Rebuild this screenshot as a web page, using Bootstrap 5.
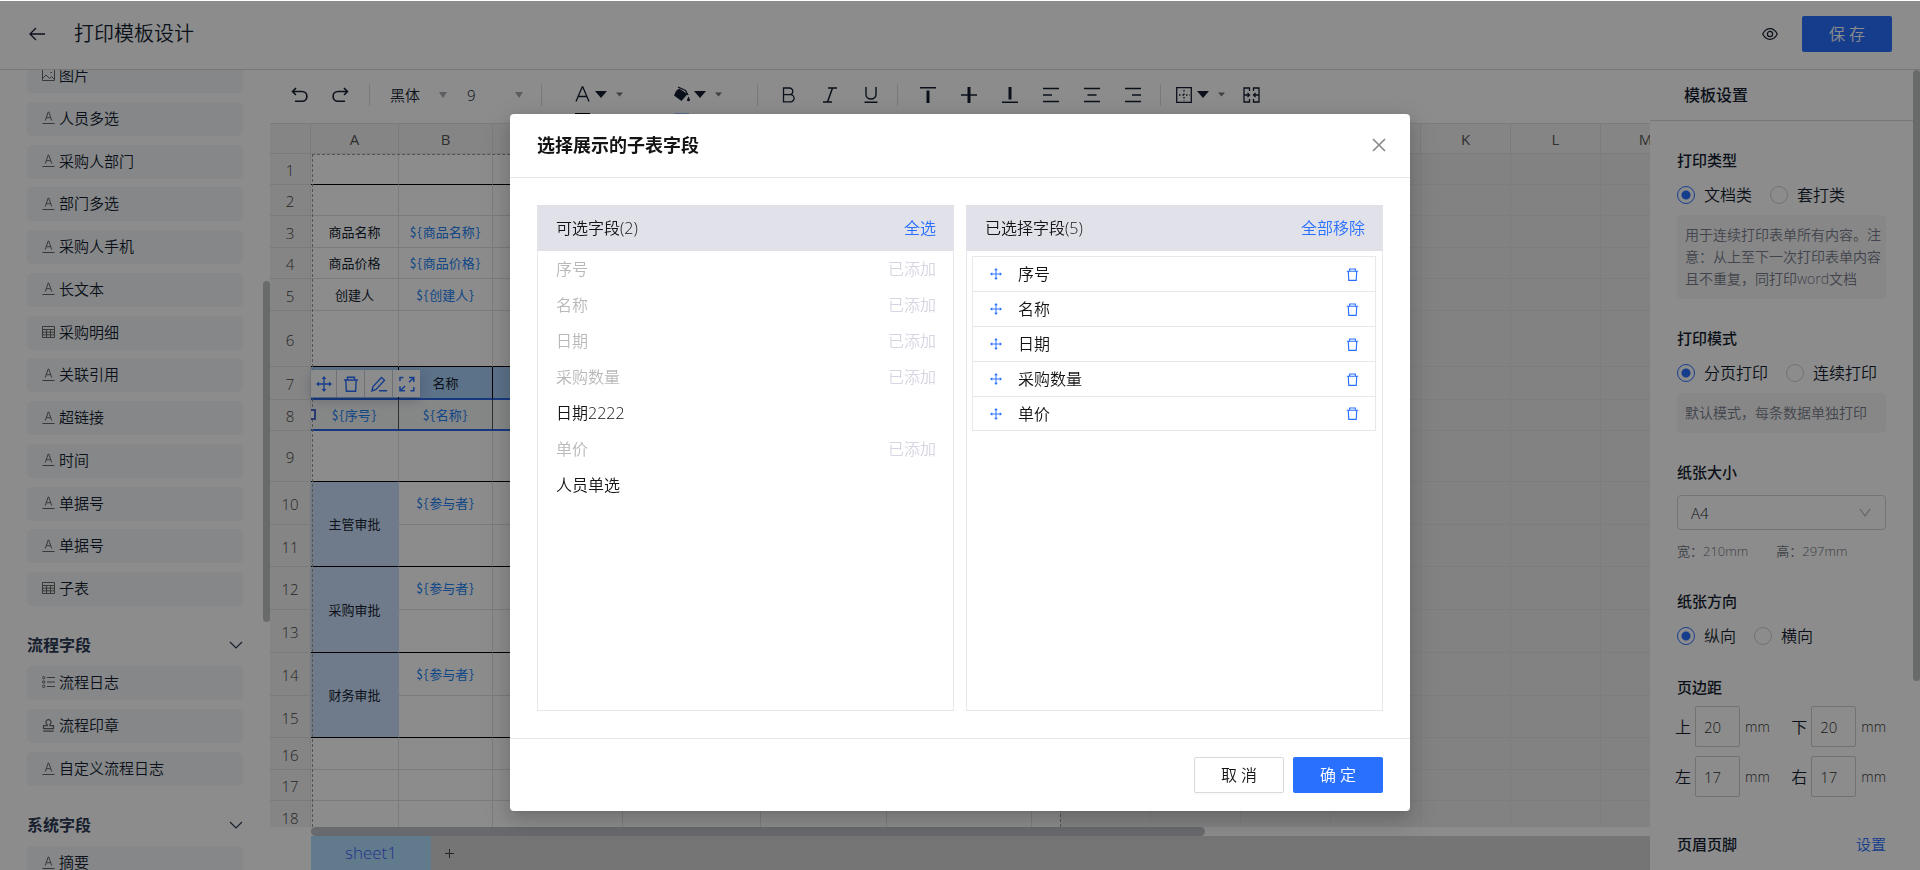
<!DOCTYPE html>
<html lang="zh-CN">
<head>
<meta charset="utf-8">
<meta name="viewport" content="width=device-width, initial-scale=1">
<title>打印模板设计</title>
<link rel="stylesheet" href="https://cdn.jsdelivr.net/npm/bootstrap@5.3.0/dist/css/bootstrap.min.css">
<style>
:root{--blue:#2970ff;--ink:#141e31;--line:#e1e1e1}
body{font-family:"Open Sans","Noto Sans CJK SC",sans-serif;font-size:15px;line-height:24px;font-weight:350;color:var(--ink);background:#fff;padding-top:1px}
button,input,select{font-weight:inherit}
svg{display:block;flex:none}
.ic{fill:none;stroke:currentColor}
a{color:var(--blue);text-decoration:none}
.main-blue{background:var(--blue);color:#fff;border:0}
.act{width:90px;height:36px;border-radius:2px;font-size:16px;font-weight:350;line-height:24px;padding:0}
.act:hover{background:var(--blue);color:#fff}
.bare{border:0;background:none;padding:0;color:inherit}

/* top bar */
.topbar{height:69px;border-bottom:1px solid #d9d9d9;padding:0 28px 3px}
.topbar h1{font-size:20px;line-height:28px;font-weight:350;margin:0 0 0 28px}

/* field list */
.fields{width:270px}
.fields-in{padding:0 27px;margin-top:-11px}
.fields h2{font-size:16px;line-height:42px;font-weight:700;padding-top:18px;margin:0;color:#2c3a55}
.fld{height:34px;padding:0 15px 2px;gap:4px;border-radius:5px;background:#f3f6f9;color:var(--ink)}
.fld svg{color:#666}
.fld-long{height:547px}
.thumb{position:absolute;right:0;width:7px;border-radius:4px;background:#bfc4c3}
.fields .thumb{top:211px;height:341px}

/* editor toolbar */
.tools{height:53px;padding:0 0 4px 21px}
.tool{width:41px;height:34px;display:flex;align-items:center;justify-content:center}
.sep{width:1px;height:22px;background:#dcdce0}
.pick{border:0;background:no-repeat right center/8px 6px url("data:image/svg+xml,%3Csvg xmlns='http://www.w3.org/2000/svg' viewBox='0 0 8 6'%3E%3Cpath d='M0 0h8L4 6z' fill='%23a9abb2'/%3E%3C/svg%3E");appearance:none;color:var(--ink);padding:0;height:30px;line-height:30px}
.swatch-tool{width:46px;gap:5px;position:relative;height:44px}
.swatch-tool i{position:absolute;left:0;bottom:1px;width:15px;height:3px}

/* sheet */
.sheet-view{overflow:hidden;position:relative}
.cells{border-collapse:separate;border-spacing:0;table-layout:fixed;background:linear-gradient(to right,#fff 790px,#ededed 790px)}
.cells th{background:#f3f3f3;color:#585757;font-weight:400;font-size:15px;line-height:20px;text-align:center;vertical-align:middle;padding:0;border:0 solid var(--line);border-width:0 1px 1px 0}
.cells thead th{height:31px;border-top-width:1px}
.cells tbody th{padding-top:2px;color:#444;font-weight:350}
.cells td{font-size:13px;line-height:18px;text-align:center;vertical-align:middle;padding:0;border:0 solid var(--line);border-width:0 1px 1px 0;font-family:"Noto Sans CJK SC",sans-serif;font-weight:400;white-space:nowrap}
.cells td.out{border-color:#e4e4e4}
.cells .tag{color:#2082f4;font-feature-settings:"hwid"}
.cells tr.k td.in{border-bottom-color:#000}
.cells td.step{background:#cbe1fc;border-right-color:#cbe1fc;border-bottom-color:#000}
.cells tr.head td.in{background:#a8cff8;border-right-color:#000;border-bottom:2px solid #2b66ea}
.cells tr.sel td.in{background:#f3f5f5;border-right-color:#555;border-bottom:2px solid #2b66ea}
.pagebox{position:absolute;left:42px;top:31px;width:749px;bottom:0;border:1px dashed #999;border-bottom:0}
.floatbar{position:absolute;left:41px;top:247px;gap:1px;background:#c9ccda;box-shadow:0 3px 12px rgba(40,60,120,.25)}
.floatbar button{width:27px;height:27px;background:#fff;color:var(--blue);display:flex;align-items:center;justify-content:center}
.floatbar button:first-child{width:25px}
.handle{position:absolute;left:41px;top:286px;width:5px;height:11px;border:2px solid #4b6ad0;border-left:0;background:#fff}
.hbar{height:9px}
.hbar div{height:9px;width:894px;margin-left:41px;border-radius:5px;background:#bfc1c8}
.tabs{height:34px;background:#d6d6d6}
.tabs .corner{width:41px;background:#fff}
.tabs .cur{width:120px;background:#b2e1ff;color:#3f5cff;font-size:17px}
.tabs .plus{width:36px;color:#444}

/* settings */
.settings{width:270px}
.settings h2{font-size:16px;line-height:24px;font-weight:500;margin:0 7px 0 0;padding:13px 34px;border-bottom:1px solid #d9d9d9}
.settings-in{padding:28px 34px 0 27px}
.settings h3,.settings legend{font-size:15px;line-height:22px;padding-bottom:2px;font-weight:500;margin:0;float:none}
.settings section,.settings fieldset{margin-bottom:28px}
.settings .thumb{top:0;height:611px}
.opts{gap:18px;margin-top:10px;font-size:16px}
.opts label{display:flex;align-items:center;gap:9px}
.opts .form-check-input{width:18px;height:18px;margin:0;border:1px solid #d0d0d0;background-color:#fff}
.opts .form-check-input:checked{border-color:var(--blue);background:radial-gradient(circle,var(--blue) 4px,transparent 5px)}
.hint{margin:8px 0 0;padding:9px 5px 9px 8px;border-radius:5px;background:#f6f6f7;color:#777c8a;font-size:14px;line-height:22px}
.paper{width:100%;height:35px;margin-top:10px;padding:0 13px;border:1px solid #d3d3d3;border-radius:4px;color:var(--ink);appearance:none;background:no-repeat right 14px center/12px 10px url("data:image/svg+xml,%3Csvg xmlns='http://www.w3.org/2000/svg' viewBox='0 0 12 10'%3E%3Cpath d='M1 1l5 7 5-7' fill='none' stroke='%23b5b5b5' stroke-width='1.2'/%3E%3C/svg%3E") #fff}
.dims{margin-top:10px;font-size:13px;line-height:22px;color:#6f7482;gap:28px}
.margins{display:grid;grid-template-columns:auto auto;justify-content:space-between;row-gap:9px;margin:6px 0 0 -2px}
.margins label{display:flex;align-items:center;gap:4px;font-size:16px}
.margins input{width:45px;height:41px;border:1px solid #cfcfcf;border-radius:2px;padding:0 8px;font-size:15px;color:#333;background:none}
.margins span{font-size:14px;margin-left:1px;color:#333}

/* overlay and dialog */
.veil{position:fixed;inset:1px 0 0;background:rgba(0,0,0,.45);z-index:1040}
.picker{max-width:900px;margin:114px auto 0}
.picker .modal-content{border:0;border-radius:4px;box-shadow:0 3px 6px -4px rgba(0,0,0,.12),0 6px 16px rgba(0,0,0,.12),0 9px 28px 8px rgba(0,0,0,.1);color:#141414}
.picker .modal-header{height:64px;padding:0 24px 1px 27px;border-bottom:1px solid #e8e8e8}
.picker .modal-title{font-size:18px;font-weight:700;line-height:26px}
.picker .modal-body{padding:27px;font-size:16px;gap:12px}
.pane{height:506px;border:1px solid #e8e8eb;flex:1 1 0}
.pane-head{height:46px;margin:-1px -1px 0;padding:0 18px 0 19px;background:#e1e1ea}
.pane h3{font-size:16px;line-height:24px;font-weight:350;margin:0}
.pool li{height:36px;padding:0 17px 0 18px}
.pool .used{color:#b9b9b9}
.pool .used span+span{color:#d6d6e2}
.chosen{margin:5px 6px 0 5px;border:1px solid #e8e8eb}
.chosen li{height:35px;padding:0 16px 0 17px;gap:16px;border-bottom:1px solid #e8e8eb}
.chosen li:last-child{border-bottom:0;height:33px}
.chosen svg{color:var(--blue)}
.picker .modal-footer{padding:18px 27px;gap:9px;border-top:1px solid #e8e8e8}
.picker .modal-footer>*{margin:0}
.cancel{border:1px solid #d9d9d9;background:#fff;color:#141414;box-shadow:0 2px 0 rgba(0,0,0,.02)}
</style>
</head>
<body class="vh-100 d-flex flex-column overflow-hidden">

<svg width="0" height="0" class="position-absolute" aria-hidden="true">
  <symbol id="i-text" viewBox="0 0 12 13"><path class="ic" d="M2.800 9.500 5.700 1h.6l2.900 8.500M3.800 6.700h4.400M0 12.500h12"/></symbol>
  <symbol id="i-img" viewBox="0 0 13 12"><path class="ic" d="M.5.500h12v11H.5zM.5 9.500L4 6l3.500 3.500 2-2 3 3M8.500 3.500h1.500"/></symbol>
  <symbol id="i-table" viewBox="0 0 13 12"><path class="ic" d="M.5.500h12v11H.5zM.5 3.500h12M.5 6.200h12M.5 8.800h12M4.500 3.500v8M8.500 3.500v8"/></symbol>
  <symbol id="i-list" viewBox="0 0 13 12"><path class="ic" d="M5 1.500h8M5 6h8M5 10.500h8"/><g class="ic"><circle cx="1.700" cy="1.700" r="1.200"/><circle cx="1.700" cy="6" r="1.200"/><circle cx="1.700" cy="10.300" r="1.200"/></g></symbol>
  <symbol id="i-stamp" viewBox="0 0 12 13"><path class="ic" stroke-width="1.200" d="M4.700 6.700V5.500a2.600 2.600 0 1 1 2.600 0v1.200h3.700v3H1v-3zM.8 12.200h10.400"/></symbol>
  <symbol id="i-down" viewBox="0 0 14 10"><path class="ic" stroke-width="1.200" d="M1 2l6 6 6-6"/></symbol>
  <symbol id="i-move" viewBox="0 0 16 16"><path class="ic" stroke-width="1.300" d="M8 1.500v13M1.500 8h13"/><path fill="currentColor" d="M8 0l2.400 3H5.600zM8 16l2.400-3H5.600zM0 8l3-2.400v4.800zM16 8l-3-2.400v4.800z"/></symbol>
  <symbol id="i-trash" viewBox="0 0 16 16"><path class="ic" stroke-width="1.400" d="M1 4h14M4.500 4V1.200h7V4M2.800 4l.6 11.200h9.200L13.200 4"/></symbol>
  <symbol id="i-pen" viewBox="0 0 16 16"><path class="ic" stroke-width="1.400" d="M1 15l1-4.500L10.500 1.500l3 2.800L5 13.500zM8 14.800h8"/></symbol>
  <symbol id="i-full" viewBox="0 0 16 16"><path class="ic" stroke-width="1.500" d="M1 5V1.500h3.500M10 1.500h4.800V6M14.800 11v3.800H11.500M6 14.800H1V10.300M14.500 1.800L10 6.300M1.500 14.500L6 10"/></symbol>
  <symbol id="i-tri" viewBox="0 0 12 7"><path fill="currentColor" d="M0 0h12L6 7z"/></symbol>
</svg>

<header class="topbar d-flex align-items-center flex-shrink-0">
  <button class="bare" aria-label="返回"><svg width="18" height="14" viewBox="0 0 18 14"><path class="ic" stroke-width="1.300" d="M17 7H2M8 1L2 7l6 6"/></svg></button>
  <h1>打印模板设计</h1>
  <button class="bare ms-auto" aria-label="预览"><svg width="16" height="12" viewBox="0 0 16 12"><g class="ic" stroke-width="1.200"><path d="M.7 6C2.500 2.500 5 .7 8 .7S13.500 2.500 15.300 6C13.500 9.500 11 11.300 8 11.300S2.500 9.500.7 6z"/><circle cx="8" cy="6" r="2.600"/></g></svg></button>
  <button class="btn act main-blue ms-4">保 存</button>
</header>

<div class="d-flex flex-grow-1" style="min-height:0">
  <aside class="fields flex-shrink-0 overflow-hidden position-relative">
    <div class="fields-in">
      <div class="fld-long d-flex flex-column justify-content-between">
        <div class="fld d-flex align-items-center"><svg width="13" height="12"><use href="#i-img"/></svg>图片</div>
        <div class="fld d-flex align-items-center"><svg width="13" height="13"><use href="#i-text"/></svg>人员多选</div>
        <div class="fld d-flex align-items-center"><svg width="13" height="13"><use href="#i-text"/></svg>采购人部门</div>
        <div class="fld d-flex align-items-center"><svg width="13" height="13"><use href="#i-text"/></svg>部门多选</div>
        <div class="fld d-flex align-items-center"><svg width="13" height="13"><use href="#i-text"/></svg>采购人手机</div>
        <div class="fld d-flex align-items-center"><svg width="13" height="13"><use href="#i-text"/></svg>长文本</div>
        <div class="fld d-flex align-items-center"><svg width="13" height="12"><use href="#i-table"/></svg>采购明细</div>
        <div class="fld d-flex align-items-center"><svg width="13" height="13"><use href="#i-text"/></svg>关联引用</div>
        <div class="fld d-flex align-items-center"><svg width="13" height="13"><use href="#i-text"/></svg>超链接</div>
        <div class="fld d-flex align-items-center"><svg width="13" height="13"><use href="#i-text"/></svg>时间</div>
        <div class="fld d-flex align-items-center"><svg width="13" height="13"><use href="#i-text"/></svg>单据号</div>
        <div class="fld d-flex align-items-center"><svg width="13" height="13"><use href="#i-text"/></svg>单据号</div>
        <div class="fld d-flex align-items-center"><svg width="13" height="12"><use href="#i-table"/></svg>子表</div>
      </div>
      <h2 class="d-flex align-items-center justify-content-between">流程字段<svg width="14" height="10"><use href="#i-down"/></svg></h2>
      <div class="d-flex flex-column" style="gap:9px">
        <div class="fld d-flex align-items-center"><svg width="13" height="12"><use href="#i-list"/></svg>流程日志</div>
        <div class="fld d-flex align-items-center"><svg width="13" height="13"><use href="#i-stamp"/></svg>流程印章</div>
        <div class="fld d-flex align-items-center"><svg width="13" height="13"><use href="#i-text"/></svg>自定义流程日志</div>
      </div>
      <h2 class="d-flex align-items-center justify-content-between">系统字段<svg width="14" height="10"><use href="#i-down"/></svg></h2>
      <div class="fld d-flex align-items-center"><svg width="13" height="13"><use href="#i-text"/></svg>摘要</div>
    </div>
    <div class="thumb"></div>
  </aside>

  <main class="flex-grow-1 d-flex flex-column" style="min-width:0">
    <div class="tools d-flex align-items-center flex-shrink-0 overflow-hidden">
      <button class="bare me-4" aria-label="撤销"><svg width="17" height="16" viewBox="0 0 17 16"><path class="ic" stroke-width="1.600" d="M5 1L1.500 4.500 5 8M1.500 4.500H11a4.800 4.800 0 0 1 0 9.800H4"/></svg></button>
      <button class="bare" aria-label="重做"><svg width="17" height="16" viewBox="0 0 17 16"><path class="ic" stroke-width="1.600" d="M12 1l3.500 3.500L12 8M15.500 4.500H6a4.800 4.800 0 0 0 0 9.800h7"/></svg></button>
      <div class="sep" style="margin:0 20px"></div>
      <select class="pick" aria-label="字体" style="width:57px"><option>黑体</option></select>
      <select class="pick" aria-label="字号" style="width:56px;margin-left:20px"><option>9</option></select>
      <div class="sep" style="margin:0 33px 0 18px"></div>
      <button class="bare tool swatch-tool justify-content-start" aria-label="文字颜色"><svg width="15" height="18" viewBox="0 0 15 18"><path class="ic" stroke-width="1.300" d="M1 15.500L7.200 1h.6L14 15.500M3.300 10.500h8.400"/></svg><svg width="12" height="7"><use href="#i-tri"/></svg><svg class="ms-1" width="7" height="5" style="color:#777"><use href="#i-tri"/></svg><i style="background:#000"></i></button>
      <button class="bare tool swatch-tool justify-content-start" aria-label="填充颜色" style="margin-left:53px"><svg width="16" height="18" viewBox="0 0 16 18"><path fill="currentColor" d="M2 5l3-2.500 8.500 5.500L7.500 15 0 9.500z"/><path class="ic" stroke-width="1.300" d="M4 1l7.500 3.500L14 9"/><path fill="currentColor" d="M14.500 10.500l1.300 2.800a1.400 1.400 0 1 1-2.600 0z"/></svg><svg width="12" height="7" style="margin-left:-1px"><use href="#i-tri"/></svg><svg class="ms-1" width="7" height="5" style="color:#777"><use href="#i-tri"/></svg><i style="background:#9cc7ff"></i></button>
      <div class="sep" style="margin:0 10px 0 37px"></div>
      <button class="bare tool" aria-label="加粗"><svg width="16" height="16" viewBox="0 0 16 16"><path class="ic" stroke-width="1.300" d="M2.500 1H8.500a3.300 3.300 0 0 1 0 6.600H2.500zM2.500 7.600h7a3.600 3.600 0 0 1 0 7.200h-7z"/></svg></button>
      <button class="bare tool" aria-label="斜体"><svg width="16" height="16" viewBox="0 0 16 16"><path class="ic" stroke-width="1.500" d="M6 1h9M1 15h9M10.500 1l-5 14"/></svg></button>
      <button class="bare tool" aria-label="下划线"><svg width="16" height="16" viewBox="0 0 16 16"><path class="ic" stroke-width="1.400" d="M3 0v7.500a5 4.500 0 0 0 10 0V0M1.500 15.200h13"/></svg></button>
      <div class="sep" style="margin:0 9px 0 6px"></div>
      <button class="bare tool" aria-label="顶端对齐"><svg width="16" height="16" viewBox="0 0 16 16"><path fill="currentColor" d="M0 0h16v1.500H0zM6.500 3.500h3V16h-3z"/></svg></button>
      <button class="bare tool" aria-label="垂直居中"><svg width="16" height="16" viewBox="0 0 16 16"><path fill="currentColor" d="M0 7.200h16v1.600H0zM6.500 0h3v16h-3z"/></svg></button>
      <button class="bare tool" aria-label="底端对齐"><svg width="16" height="16" viewBox="0 0 16 16"><path fill="currentColor" d="M0 14.500h16V16H0zM6.500 0h3v12.500h-3z"/></svg></button>
      <button class="bare tool" aria-label="左对齐"><svg width="16" height="16" viewBox="0 0 16 16"><path class="ic" stroke-width="1.400" d="M0 1.500h16M0 8h9M0 14.500h16"/></svg></button>
      <button class="bare tool" aria-label="居中"><svg width="16" height="16" viewBox="0 0 16 16"><path class="ic" stroke-width="1.400" d="M0 1.500h16M3.500 8h9M0 14.500h16"/></svg></button>
      <button class="bare tool" aria-label="右对齐"><svg width="16" height="16" viewBox="0 0 16 16"><path class="ic" stroke-width="1.400" d="M0 1.500h16M7 8h9M0 14.500h16"/></svg></button>
      <div class="sep" style="margin:0 15px 0 7px"></div>
      <button class="bare tool swatch-tool justify-content-start" aria-label="边框"><svg width="16" height="16" viewBox="0 0 16 16"><path class="ic" stroke-width="1.300" d="M.7.700h14.600v14.600H.7z"/><path class="ic" stroke-width="1.300" stroke-dasharray="1.500 2" d="M3 8h11M8 3v11"/></svg><svg width="12" height="7"><use href="#i-tri"/></svg><svg class="ms-1" width="7" height="5" style="color:#777"><use href="#i-tri"/></svg></button>
      <button class="bare" aria-label="合并单元格" style="margin-left:21px"><svg width="17" height="16" viewBox="0 0 17 16"><path class="ic" stroke-width="1.300" d="M6.500 4V1H1v14h5.500v-3M10.500 4V1H16v14h-5.500v-3M1 8h5M16 8h-5M4.500 6l2 2-2 2M12.500 6l-2 2 2 2"/></svg></button>
    </div>

    <div class="sheet-view flex-grow-1">
      <table class="cells">
        <colgroup id="cols"></colgroup>
        <thead><tr id="letters"><th></th></tr></thead>
        <tbody id="rows"></tbody>
      </table>
      <div class="pagebox"></div>
      <div class="handle"></div>
      <div class="floatbar d-flex">
        <button class="bare" aria-label="移动"><svg width="16" height="16"><use href="#i-move"/></svg></button>
        <button class="bare" aria-label="删除"><svg width="16" height="16"><use href="#i-trash"/></svg></button>
        <button class="bare" aria-label="编辑"><svg width="16" height="16"><use href="#i-pen"/></svg></button>
        <button class="bare" aria-label="展开"><svg width="16" height="16"><use href="#i-full"/></svg></button>
      </div>
    </div>
    <div class="hbar flex-shrink-0"><div></div></div>
    <div class="tabs d-flex flex-shrink-0">
      <div class="corner"></div>
      <button class="bare cur">sheet1</button>
      <button class="bare plus" aria-label="新增"><svg class="mx-auto" width="9" height="9" viewBox="0 0 9 9"><path class="ic" d="M4.500 0v9M0 4.500h9"/></svg></button>
    </div>
  </main>

  <aside class="settings flex-shrink-0 overflow-hidden position-relative">
    <h2>模板设置</h2>
    <div class="settings-in">
      <fieldset>
        <legend>打印类型</legend>
        <div class="opts d-flex">
          <label><input class="form-check-input" type="radio" name="kind" checked>文档类</label>
          <label><input class="form-check-input" type="radio" name="kind">套打类</label>
        </div>
        <p class="hint">用于连续打印表单所有内容。注意：从上至下一次打印表单内容且不重复，同打印word文档</p>
      </fieldset>
      <fieldset>
        <legend>打印模式</legend>
        <div class="opts d-flex">
          <label><input class="form-check-input" type="radio" name="mode" checked>分页打印</label>
          <label><input class="form-check-input" type="radio" name="mode">连续打印</label>
        </div>
        <p class="hint">默认模式，每条数据单独打印</p>
      </fieldset>
      <section>
        <h3><label for="paper">纸张大小</label></h3>
        <select class="paper" id="paper"><option>A4</option></select>
        <div class="dims d-flex"><span>宽：210mm</span><span>高：297mm</span></div>
      </section>
      <fieldset>
        <legend>纸张方向</legend>
        <div class="opts d-flex">
          <label><input class="form-check-input" type="radio" name="dir" checked>纵向</label>
          <label><input class="form-check-input" type="radio" name="dir">横向</label>
        </div>
      </fieldset>
      <fieldset class="mb-0">
        <legend>页边距</legend>
        <div class="margins">
          <label>上<input type="text" value="20"><span>mm</span></label>
          <label>下<input type="text" value="20"><span>mm</span></label>
          <label>左<input type="text" value="17"><span>mm</span></label>
          <label>右<input type="text" value="17"><span>mm</span></label>
        </div>
      </fieldset>
      <div class="d-flex justify-content-between" style="margin-top:36px"><h3>页眉页脚</h3><a href="#" style="line-height:22px">设置</a></div>
    </div>
    <div class="thumb"></div>
  </aside>
</div>

<div class="veil"></div>

<div class="modal d-block" tabindex="-1" role="dialog" aria-labelledby="pickTitle">
  <div class="modal-dialog picker">
    <div class="modal-content">
      <div class="modal-header">
        <h2 class="modal-title" id="pickTitle">选择展示的子表字段</h2>
        <button class="bare" aria-label="关闭"><svg width="14" height="14" viewBox="0 0 14 14" style="color:#888"><path class="ic" stroke-width="1.600" d="M1 1l12 12M13 1L1 13"/></svg></button>
      </div>
      <div class="modal-body d-flex">
        <div class="pane">
          <div class="pane-head d-flex align-items-center justify-content-between"><h3>可选字段(2)</h3><a href="#">全选</a></div>
          <ul class="pool list-unstyled mb-0">
            <li class="used d-flex align-items-center justify-content-between"><span>序号</span><span>已添加</span></li>
            <li class="used d-flex align-items-center justify-content-between"><span>名称</span><span>已添加</span></li>
            <li class="used d-flex align-items-center justify-content-between"><span>日期</span><span>已添加</span></li>
            <li class="used d-flex align-items-center justify-content-between"><span>采购数量</span><span>已添加</span></li>
            <li class="d-flex align-items-center">日期2222</li>
            <li class="used d-flex align-items-center justify-content-between"><span>单价</span><span>已添加</span></li>
            <li class="d-flex align-items-center">人员单选</li>
          </ul>
        </div>
        <div class="pane">
          <div class="pane-head d-flex align-items-center justify-content-between"><h3>已选择字段(5)</h3><a href="#">全部移除</a></div>
          <ul class="chosen list-unstyled mb-0">
            <li class="d-flex align-items-center"><svg width="12" height="12"><use href="#i-move"/></svg><span>序号</span><button class="bare ms-auto" aria-label="移除序号"><svg width="13" height="13"><use href="#i-trash"/></svg></button></li>
            <li class="d-flex align-items-center"><svg width="12" height="12"><use href="#i-move"/></svg><span>名称</span><button class="bare ms-auto" aria-label="移除名称"><svg width="13" height="13"><use href="#i-trash"/></svg></button></li>
            <li class="d-flex align-items-center"><svg width="12" height="12"><use href="#i-move"/></svg><span>日期</span><button class="bare ms-auto" aria-label="移除日期"><svg width="13" height="13"><use href="#i-trash"/></svg></button></li>
            <li class="d-flex align-items-center"><svg width="12" height="12"><use href="#i-move"/></svg><span>采购数量</span><button class="bare ms-auto" aria-label="移除采购数量"><svg width="13" height="13"><use href="#i-trash"/></svg></button></li>
            <li class="d-flex align-items-center"><svg width="12" height="12"><use href="#i-move"/></svg><span>单价</span><button class="bare ms-auto" aria-label="移除单价"><svg width="13" height="13"><use href="#i-trash"/></svg></button></li>
          </ul>
        </div>
      </div>
      <div class="modal-footer">
        <button class="btn act cancel">取 消</button>
        <button class="btn act main-blue">确 定</button>
      </div>
    </div>
  </div>
</div>

<script src="https://cdn.jsdelivr.net/npm/bootstrap@5.3.0/dist/js/bootstrap.bundle.min.js"></script>
<script>
// column widths, row heights and cell contents of the template sheet
const widths = [41, 88, 94, 130, 138, 126, 145, 119, 90, 90, 90, 90, 90, 90, 90, 90, 90, 90, 90];
const heights = [31, 31, 32, 31, 32, 56, 33, 31, 51, 43, 42, 43, 43, 43, 42, 32, 31, 32];
const thick = [1, 6, 9, 11, 13, 15];
const text = {
  '3A': '商品名称', '3B': '${商品名称}', '4A': '商品价格', '4B': '${商品价格}', '5A': '创建人', '5B': '${创建人}',
  '7B': '名称', '8A': '${序号}', '8B': '${名称}', '10B': '${参与者}', '12B': '${参与者}', '14B': '${参与者}'
};
const steps = {10: '主管审批', 12: '采购审批', 14: '财务审批'};
const table = document.querySelector('.cells');
table.style.width = widths.reduce((a, b) => a + b) + 'px';
widths.forEach((w, i) => {
  const c = document.createElement('col');
  c.style.width = w + 'px';
  document.getElementById('cols').append(c);
  if (i) {
    const th = document.createElement('th');
    th.textContent = String.fromCharCode(64 + i);
    document.getElementById('letters').append(th);
  }
});
heights.forEach((h, r) => {
  const n = r + 1, tr = document.createElement('tr');
  tr.style.height = h + 'px';
  if (thick.includes(n)) tr.className = 'k';
  if (n === 7) tr.className = 'head';
  if (n === 8) tr.className = 'sel';
  const th = document.createElement('th');
  th.textContent = n;
  tr.append(th);
  for (let c = 1; c < widths.length; c++) {
    if (c === 1 && steps[n - 1]) continue;
    const td = document.createElement('td'), key = n + String.fromCharCode(64 + c);
    td.className = c < 7 ? 'in' : 'out';
    if (c === 1 && steps[n]) { td.rowSpan = 2; td.classList.add('step'); td.textContent = steps[n]; }
    if (text[key]) { td.textContent = text[key]; if (text[key][0] === '$') td.classList.add('tag'); }
    tr.append(td);
  }
  document.getElementById('rows').append(tr);
});
</script>
</body>
</html>
